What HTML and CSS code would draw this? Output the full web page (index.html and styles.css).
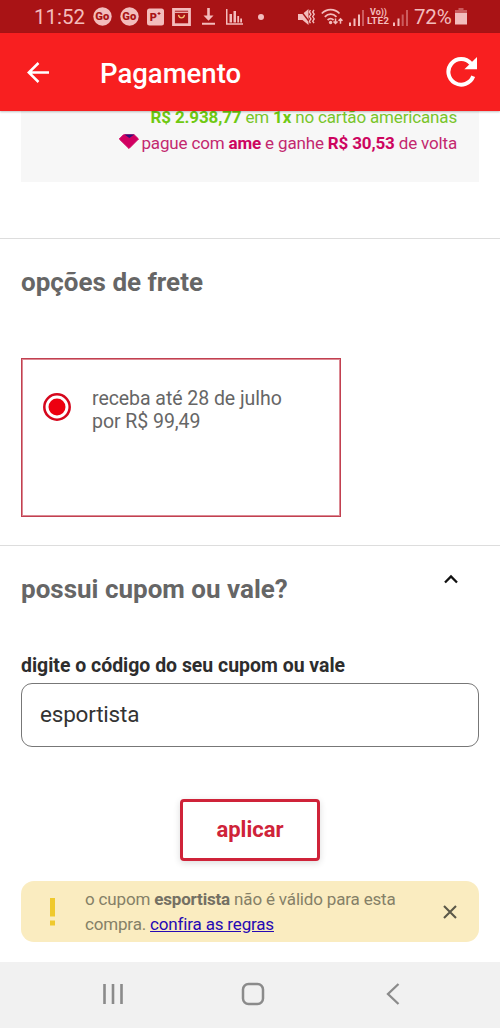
FILE: index.html
```html
<!DOCTYPE html>
<html lang="pt-BR">
<head>
<meta charset="utf-8">
<title>Pagamento</title>
<link rel="stylesheet" href="styles.css">
</head>
<body>
<div class="screen">
  <div class="status">
    <span class="time">11:52</span>
    <svg class="go" width="19" height="19" viewBox="0 0 19 19"><circle cx="9.5" cy="9.5" r="9.2" fill="#f3bcbc"/><text class="go-text" x="2.3" y="13" textLength="14" lengthAdjust="spacingAndGlyphs">Go</text></svg>
    <svg class="go" width="19" height="19" viewBox="0 0 19 19"><circle cx="9.5" cy="9.5" r="9.2" fill="#f3bcbc"/><text class="go-text" x="2.3" y="13" textLength="14" lengthAdjust="spacingAndGlyphs">Go</text></svg>
    <svg class="promo" width="17" height="18" viewBox="0 0 17 18"><rect y=".5" width="17" height="17" rx="2.5" fill="#f3bcbc"/><text class="promo-text" x="2.8" y="13.2">P</text><path d="M12 4v3M10.500 5.500h3" stroke="#a91315"/></svg>
    <svg class="bag" width="19" height="18" viewBox="0 0 19 18"><rect x="1.500" y="1.300" width="16" height="15.400" fill="none" stroke="#f3bcbc" stroke-width="2.800"/><path d="M3 4.300h13" stroke="#f3bcbc" stroke-width="1.200"/><path d="M6.500 6.800c.6 4 5.400 4 6 0" fill="none" stroke="#f6bd72" stroke-width="1.300"/></svg>
    <svg class="download" width="13" height="17" viewBox="0 0 13 17"><path d="M5.200 0h2.600v7.500h3.700l-5 5.300-5-5.300h3.700zM0 14.800h13v1.900H0z" fill="#f3bcbc"/></svg>
    <svg class="chart" width="17" height="17" viewBox="0 0 17 17"><path d="M0 1h1.500v14.300H17v1.500H0zM3.500 6H6v8.500H3.500zM7.500 3H10v11.500H7.500zM11.300 8h1.800v6.500h-1.800zM14.200 10.500H16v4h-1.800z" fill="#f3bcbc"/></svg>
    <i class="dot"></i>
    <svg class="mute" width="18" height="18" viewBox="0 0 18 18"><path d="M0 6h4.500L10.500 1v16L4.500 12H0z" fill="#f3bcbc"/><path d="M1.500 1l10 13" stroke="#a91315" stroke-width="1.300"/><path d="M12.400 2l-1 2 1.500 2.300-1.500 2.300 1.500 2.300-1.500 2.300 1 2M16 2l-1.300 2L16.200 6.300l-1.500 2.300 1.500 2.300-1.500 2.300 1.300 2" fill="none" stroke="#f3bcbc" stroke-width="1.400"/></svg>
    <svg class="wifi" width="23" height="18" viewBox="0 0 23 18"><g fill="none" stroke="#f3bcbc" stroke-width="1.800"><path d="M.8 5.500c5-5.200 12.700-5.200 17.700 0M3.800 8.800c3.500-3.500 8.200-3.500 11.700 0M6.600 12c1.900-1.700 4.100-1.700 6 0"/><path d="M14.500 10.500v5M12.500 13.500l2 2 2-2M19.500 15.700v-5M17.500 12.700l2-2 2 2" stroke-width="1.500"/></g><circle cx="9.600" cy="14.500" r="1.700" fill="#f3bcbc"/></svg>
    <svg class="signal" width="16" height="16" viewBox="0 0 16 16"><path d="M0 12.500h2V16H0zM4.500 8.500h2V16h-2zM9 4.500h2V16H9z" fill="#f3bcbc"/><path d="M13 0h2v16h-2z" fill="#cc5c5e"/></svg>
    <svg class="volte" width="23" height="19" viewBox="0 0 23 19"><text x="3" y="8" textLength="17" lengthAdjust="spacingAndGlyphs">Vo))</text><text x="0" y="17" textLength="22" lengthAdjust="spacingAndGlyphs">LTE2</text></svg>
    <svg class="signal second" width="16" height="16" viewBox="0 0 16 16"><path d="M0 12.500h2V16H0zM4.500 8.500h2V16h-2z" fill="#f3bcbc"/><path d="M8.700 4.500h2V16h-2zM13 0h2v16h-2z" fill="#cc5c5e"/></svg>
    <span class="percent">72%</span>
    <svg class="battery" width="12" height="18" viewBox="0 0 12 18"><path d="M3.500 0h5v2H12v5H0V2h3.500z" fill="#cc5c5e"/><path d="M0 5h12v11.500H0z" fill="#f3bcbc"/></svg>
  </div>
  <header class="bar">
    <svg class="back" width="24" height="24" viewBox="0 0 24 24"><path d="M11.500 2L1.800 11.500l9.700 9.500M2 11.500h20" fill="none" stroke="#fff" stroke-width="2.500"/></svg>
    <h1 class="title">Pagamento</h1>
    <svg class="reload" width="32" height="32" viewBox="0 0 32 32"><path d="M27.200 20.300A12.800 12.800 0 1 1 25 7.600" fill="none" stroke="#fff" stroke-width="4"/><path d="M31 1v12.300H18.400z" fill="#fff"/></svg>
  </header>
  <main class="content">
    <section class="offer">
      <p class="line green"><b>R$ 2.938,77</b> em <b>1x</b> no cartão americanas</p>
      <p class="line pink"><svg class="gem" width="20" height="15" viewBox="0 0 20 15"><path d="M4.500.8h10.700L19.500 5 10 14.500.3 5z" fill="#d10061" stroke="#d10061" stroke-linejoin="round"/><path d="M5.500.4h9.800L10.300 4z" fill="#2d1479"/></svg>pague com <b>ame</b> e ganhe <b>R$ 30,53</b> de volta</p>
    </section>
    <section class="shipping">
      <h2 class="heading">opções de frete</h2>
      <div class="option">
        <svg class="radio" width="30" height="30" viewBox="0 0 30 30"><circle cx="15" cy="15" r="12.700" fill="none" stroke="#d5071d" stroke-width="2.500"/><circle cx="15" cy="15" r="8.500" fill="#ed0010"/></svg>
        <p class="option-text">receba até 28 de julho<br>por R$ 99,49</p>
      </div>
    </section>
    <section class="coupon">
      <div class="coupon-head">
        <h2 class="heading">possui cupom ou vale?</h2>
        <svg class="caret" width="16" height="11" viewBox="0 0 16 11"><path d="M2 8.500l6-6 6 6" fill="none" stroke="#111" stroke-width="2.300"/></svg>
      </div>
      <div class="label">digite o código do seu cupom ou vale</div>
      <div class="field">esportista</div>
      <div class="apply">aplicar</div>
      <div class="alert">
        <svg class="bang" width="8" height="30" viewBox="0 0 8 30"><path d="M2 1h5v18.500H2zM2 23.500h5v5H2z" fill="#efc92d"/></svg>
        <p class="alert-text">o cupom <b>esportista</b> não é válido para esta<br>compra. <a class="rules">confira as regras</a></p>
        <svg class="close" width="16" height="16" viewBox="0 0 16 16"><path d="M2 2l12 12M14 2L2 14" fill="none" stroke="#5b5848" stroke-width="2.100"/></svg>
      </div>
    </section>
  </main>
  <nav class="nav">
    <svg class="recents" width="22" height="22" viewBox="0 0 22 22"><path d="M2.500 1v20M11 1v20M19.500 1v20" stroke="#8b8b8b" stroke-width="2.600"/></svg>
    <svg class="home" width="24" height="24" viewBox="0 0 24 24"><rect x="2" y="2" width="20" height="20" rx="5.500" fill="none" stroke="#8b8b8b" stroke-width="2.500"/></svg>
    <svg class="prev" width="14" height="22" viewBox="0 0 14 22"><path d="M12.500 1L2 11l10.500 10" fill="none" stroke="#8b8b8b" stroke-width="2.300"/></svg>
  </nav>
</div>
</body>
</html>
```
FILE: styles.css
```css
* { box-sizing: border-box; }
body, h1, h2, p { margin: 0; }
svg { display: block; flex: none; }
.screen {
  width: 500px;
  height: 1028px;
  display: flex;
  flex-direction: column;
  overflow: hidden;
  background: #fff;
  font-family: Roboto, "Liberation Sans", sans-serif;
  white-space: nowrap;
}
.status {
  height: 33px;
  flex: none;
  display: flex;
  align-items: center;
  padding-left: 34px;
  background: #a91315;
  color: #f3bcbc;
  font-size: 20.5px;
  line-height: 33px;
}
.time { width: 51px; padding-top: 2px; }
.go { margin-left: 8px; }
.go-text { font-size: 11px; font-weight: 900; fill: #a91315; }
.promo { margin-left: 8px; }
.promo-text { font-size: 11px; font-weight: 900; fill: #a91315; }
.bag { margin-left: 8px; }
.download { margin-left: 11px; }
.chart { margin-left: 11px; }
.dot { width: 6px; height: 6px; margin-left: 15px; border-radius: 50%; background: #f3bcbc; }
.mute { margin-left: 34px; }
.wifi { margin-left: 5px; }
.signal { margin-left: 5px; margin-top: 2px; }
.volte { margin-left: 2px; font-size: 9.5px; font-weight: 700; fill: #f3bcbc; }
.second { margin-left: 3px; }
.percent { width: 39px; margin-left: 5px; padding-top: 2px; letter-spacing: -0.2px; }
.battery { margin-left: 2px; }
.bar {
  height: 78px;
  flex: none;
  display: flex;
  align-items: center;
  padding: 2px 22px 0 27px;
  background: #f81f20;
  box-shadow: 0 1px 2px rgba(0, 0, 0, .25);
  z-index: 1;
}
.title { flex: 1; margin-left: 49px; padding-top: 1px; color: #fff; font-size: 27.5px; line-height: 36px; font-weight: 500; }
.reload { margin-top: -2px; }
.content { height: 851px; flex: none; overflow: hidden; }
.offer {
  display: flow-root;
  height: 71px;
  margin: 0 21px;
  padding: 0 22px;
  background: #f7f7f7;
  font-size: 17px;
  line-height: 26px;
  letter-spacing: -0.16px;
}
.line { display: flex; justify-content: flex-end; white-space: pre; }
.green { margin-top: -7px; color: #79c52b; }
.green b { color: #6fc911; }
.pink { color: #c3286f; }
.pink b { color: #cd0560; }
.gem { margin: 4px 2px 0 0; }
.shipping { height: 307px; margin-top: 56px; padding: 27px 21px 0; border-top: 1px solid #ddd; }
.heading { color: #666; font-size: 26px; line-height: 32px; font-weight: 700; }
.option {
  display: flex;
  width: 320px;
  height: 159px;
  margin-top: 60px;
  padding: 28px 20px;
  border: 1px solid #c24050;
  box-shadow: inset 0 0 0 1px #dc8a94;
}
.radio { margin-top: 5px; }
.option-text { margin-left: 20px; color: #666; font-size: 19.5px; line-height: 23px; letter-spacing: -0.05px; }
.coupon { padding: 27px 21px 0; border-top: 1px solid #ddd; }
.coupon-head { display: flex; justify-content: space-between; padding-right: 20px; }
.caret { margin-top: 1px; }
.label { margin-top: 49px; color: #2d2d2d; font-size: 19.45px; line-height: 24px; font-weight: 700; }
.field {
  height: 64px;
  margin-top: 5px;
  padding-left: 18px;
  border: 1px solid #777;
  border-radius: 11px;
  color: #333;
  font-size: 22.5px;
  line-height: 61px;
  letter-spacing: -0.2px;
}
.apply {
  width: 140px;
  height: 62px;
  margin: 52px auto 0;
  border: 3px solid #cf2339;
  border-radius: 4px;
  box-shadow: 0 2px 7px rgba(0, 0, 0, .14);
  color: #cf2339;
  font-size: 22px;
  line-height: 56px;
  font-weight: 700;
  text-align: center;
}
.alert {
  display: flex;
  align-items: center;
  height: 61px;
  margin-top: 20px;
  padding: 0 21px 0 27px;
  border-radius: 13px;
  background: #faecc0;
}
.alert-text { flex: 1; margin-left: 29px; color: #858067; font-size: 17px; line-height: 25px; letter-spacing: -0.17px; }
.alert-text b { color: #747063; }
.rules { color: #2509b4; text-decoration: underline; }
.nav {
  flex: 1;
  display: flex;
  align-items: center;
  padding: 0 0 2px 102px;
  background: #f1f1f1;
}
.home { margin-left: 117px; }
.prev { margin-left: 121px; }
```
